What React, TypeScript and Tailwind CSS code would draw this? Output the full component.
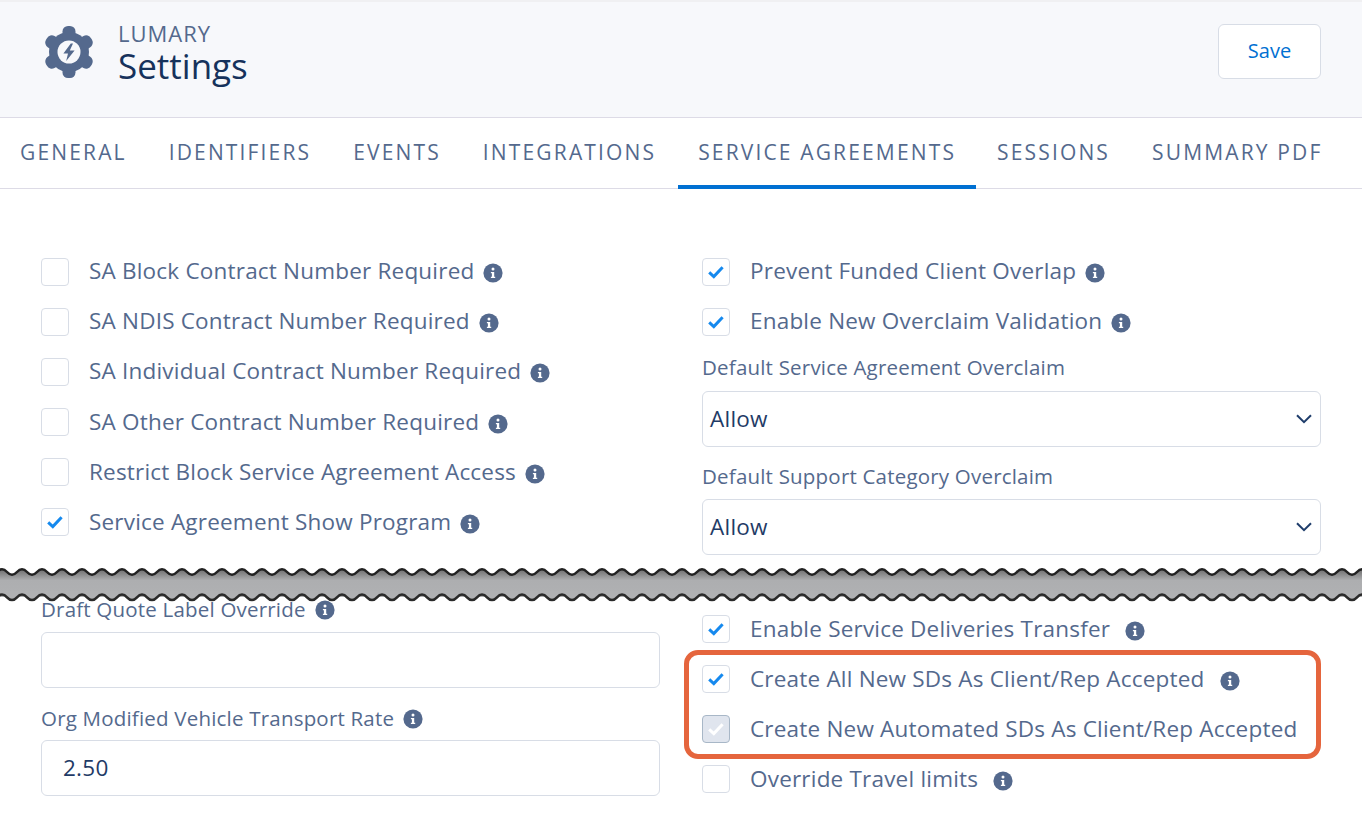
const tabs = ['General', 'Identifiers', 'Events', 'Integrations', 'Service Agreements', 'Sessions', 'Summary PDF'];

const leftChecks = [
  { label: 'SA Block Contract Number Required', checked: false, low: false },
  { label: 'SA NDIS Contract Number Required', checked: false, low: false },
  { label: 'SA Individual Contract Number Required', checked: false, low: false },
  { label: 'SA Other Contract Number Required', checked: false, low: true },
  { label: 'Restrict Block Service Agreement Access', checked: false, low: true },
  { label: 'Service Agreement Show Program', checked: true, low: true },
];

function GearIcon() {
  return (
    <svg width="52" height="54" viewBox="0 0 52 54" className="shrink-0">
      <g fill="#54698d">
        <circle cx="26" cy="27" r="20" />
        {[0, 60, 120, 180, 240, 300].map((a) => (
          <rect key={a} x="19.5" y="1" width="13" height="16" rx="5.5" transform={`rotate(${a} 26 27)`} />
        ))}
      </g>
      <circle cx="26" cy="27" r="11.5" fill="#f7f8fb" />
      <path d="M27.8 18.6 L20.4 28.6 H25 L23.2 36 L31.6 25.4 H26.8 L30 18.6 Z" fill="#54698d" />
    </svg>
  );
}

function InfoIcon({ className = '' }: { className?: string }) {
  return (
    <svg width="20" height="20" viewBox="0 0 20 20" className={`shrink-0 ${className}`}>
      <circle cx="10" cy="10" r="9.6" fill="#54698d" />
      <circle cx="10" cy="6" r="1.5" fill="#fff" />
      <path d="M7.9 9h3.3v4.7h1v1.3H7.9v-1.3h1V10.3h-1z" fill="#fff" />
    </svg>
  );
}

function Checkbox({ checked, disabled }: { checked?: boolean; disabled?: boolean }) {
  return (
    <span
      className={`flex h-[28px] w-[28px] shrink-0 items-center justify-center rounded-[4px] border ${
        disabled ? 'border-[#a8b7c7] bg-[#e0e5ee]' : 'border-[#d8dde6] bg-white'
      }`}
    >
      {checked && (
        <svg width="16" height="14" viewBox="0 0 16 14">
          <path d="M1.2 7.4 L5.8 11.6 L14.6 2.2" fill="none" stroke={disabled ? '#fff' : '#1589ee'} strokeWidth="3" />
        </svg>
      )}
    </span>
  );
}

function CheckRow({
  label,
  checked,
  disabled,
  low,
  info = true,
  infoGap = 'ml-[9px]',
}: {
  label: string;
  checked?: boolean;
  disabled?: boolean;
  low?: boolean;
  info?: boolean;
  infoGap?: string;
}) {
  return (
    <div className="flex h-[50px] items-center">
      <Checkbox checked={checked} disabled={disabled} />
      <span
        className={`ml-[20px] whitespace-nowrap text-[22.5px] leading-none tracking-[0.2px] text-[#54698d] ${
          low ? '' : 'mb-[2px]'
        }`}
      >
        {label}
      </span>
      {info && <InfoIcon className={`${infoGap} ${low ? 'mt-[4px]' : 'mt-[2px]'}`} />}
    </div>
  );
}

function FieldLabel({ text, info }: { text: string; info?: boolean }) {
  return (
    <div className="flex h-[24px] items-center text-[20.5px] leading-none tracking-[0.2px] text-[#54698d]">
      <span className="whitespace-nowrap">{text}</span>
      {info && <InfoIcon className="ml-[9px] mt-[2px]" />}
    </div>
  );
}

function SelectBox() {
  return (
    <div className="flex h-[56px] items-center justify-between rounded-[6px] border border-[#d8dde6] pl-[7px] pr-[8px] text-[22.5px] tracking-[0.25px] text-[#1f3b66]">
      <span>Allow</span>
      <svg width="16" height="10" viewBox="0 0 16 10">
        <path d="M1 1.2 L8 8.2 L15 1.2" fill="none" stroke="#1f3d6b" strokeWidth="2" />
      </svg>
    </div>
  );
}

// torn paper edge between the two cropped parts of the page
function TornEdge() {
  const width = 1362;
  const wave = (y: number) => {
    let d = `M-23 ${y}`;
    for (let x = -23; x < width + 10; x += 20) {
      d += ` q5 -5.5 10 0 q5 5.5 10 0`;
    }
    return d;
  };
  const top = wave(571);
  const bottom = wave(596.3);
  return (
    <svg width={width} height="37" viewBox={`0 564 ${width} 37`} className="block">
      <defs>
        <linearGradient id="tear" x1="0" y1="0" x2="0" y2="1">
          <stop offset="0" stopColor="#6e6e6e" />
          <stop offset="0.4" stopColor="#adaeb0" />
          <stop offset="1" stopColor="#b0b1b3" />
        </linearGradient>
      </defs>
      <path d={`${top} V${596} H-23 Z`} fill="url(#tear)" />
      <path d={`${bottom} V${590} H-23 Z`} fill="#b0b1b3" />
      <path d={top} fill="none" stroke="#222" strokeWidth="2.6" />
      <path d={bottom} fill="none" stroke="#2a2a2a" strokeWidth="2.6" />
    </svg>
  );
}

export default function App() {
  return (
    <div className="h-[818px] w-[1362px] overflow-hidden bg-white font-['Open_Sans','Noto_Sans',sans-serif]">
      {/* Header */}
      <div className="flex h-[118px] items-center justify-between border-b border-t-2 border-b-[#dddbe6] border-t-[#f0f0f2] bg-[#f7f8fb] pb-[16px] pl-[43px] pr-[41px]">
        <div className="flex items-center">
          <GearIcon />
          <div className="ml-[23px] mt-[3px]">
            <div className="text-[22px] leading-[26px] tracking-[1px] text-[#54698d]">LUMARY</div>
            <div className="text-[35px] leading-[40px] text-[#16325c]">Settings</div>
          </div>
        </div>
        <button className="h-[55px] w-[103px] rounded-[6px] border border-[#d8dde6] bg-white pb-[2px] text-[20px] text-[#0070d2]">
          Save
        </button>
      </div>

      {/* Tabs */}
      <div className="flex h-[71px] border-b border-[#dddbe6] pl-[20px]">
        {tabs.map((tab) => {
          const active = tab === 'Service Agreements';
          return (
            <div
              key={tab}
              className={`-mb-px flex items-center whitespace-nowrap border-b-4 pt-[2px] text-[21px] uppercase tracking-[2.15px] text-[#54698d] ${
                active ? '-ml-[20px] mr-[21px] border-[#0070d2] px-[20px]' : 'mr-[42px] border-transparent'
              }`}
            >
              {tab}
            </div>
          );
        })}
      </div>

      {/* Upper part */}
      <div className="grid h-[376px] grid-cols-[619px_619px] gap-x-[42px] pl-[41px] pt-[58px]">
        <div>
          {leftChecks.map((row) => (
            <CheckRow key={row.label} label={row.label} checked={row.checked} low={row.low} />
          ))}
        </div>
        <div>
          <CheckRow label="Prevent Funded Client Overlap" checked />
          <CheckRow label="Enable New Overclaim Validation" checked />
          <div className="mt-[8px]">
            <FieldLabel text="Default Service Agreement Overclaim" />
          </div>
          <div className="mt-[12px]">
            <SelectBox />
          </div>
          <div className="mt-[17px]">
            <FieldLabel text="Default Support Category Overclaim" />
          </div>
          <div className="mt-[11px]">
            <SelectBox />
          </div>
        </div>
      </div>

      <TornEdge />

      {/* Lower part */}
      <div className="-mt-[5px] grid grid-cols-[619px_619px] gap-x-[42px] pl-[41px]">
        <div>
          <FieldLabel text="Draft Quote Label Override" info />
          <div className="mt-[11px] h-[56px] rounded-[6px] border border-[#d8dde6]" />
          <div className="mt-[18px]">
            <FieldLabel text="Org Modified Vehicle Transport Rate" info />
          </div>
          <div className="mt-[10px] flex h-[56px] items-center rounded-[6px] border border-[#d8dde6] pl-[21px] text-[22.5px] tracking-[0.25px] text-[#1f3b66]">
            2.50
          </div>
        </div>
        <div className="pt-[7px]">
          <CheckRow label="Enable Service Deliveries Transfer" checked low infoGap="ml-[15px]" />
          <div className="-mb-[5px] -ml-[18px] -mt-[4px] h-[109px] rounded-[14px] border-[5px] border-[#e5653d] pl-[13px]">
            <div className="-mt-px">
              <CheckRow label="Create All New SDs As Client/Rep Accepted" checked low infoGap="ml-[15px]" />
              <CheckRow label="Create New Automated SDs As Client/Rep Accepted" checked disabled low info={false} />
            </div>
          </div>
          <CheckRow label="Override Travel limits" low infoGap="ml-[15px]" />
        </div>
      </div>
    </div>
  );
}
